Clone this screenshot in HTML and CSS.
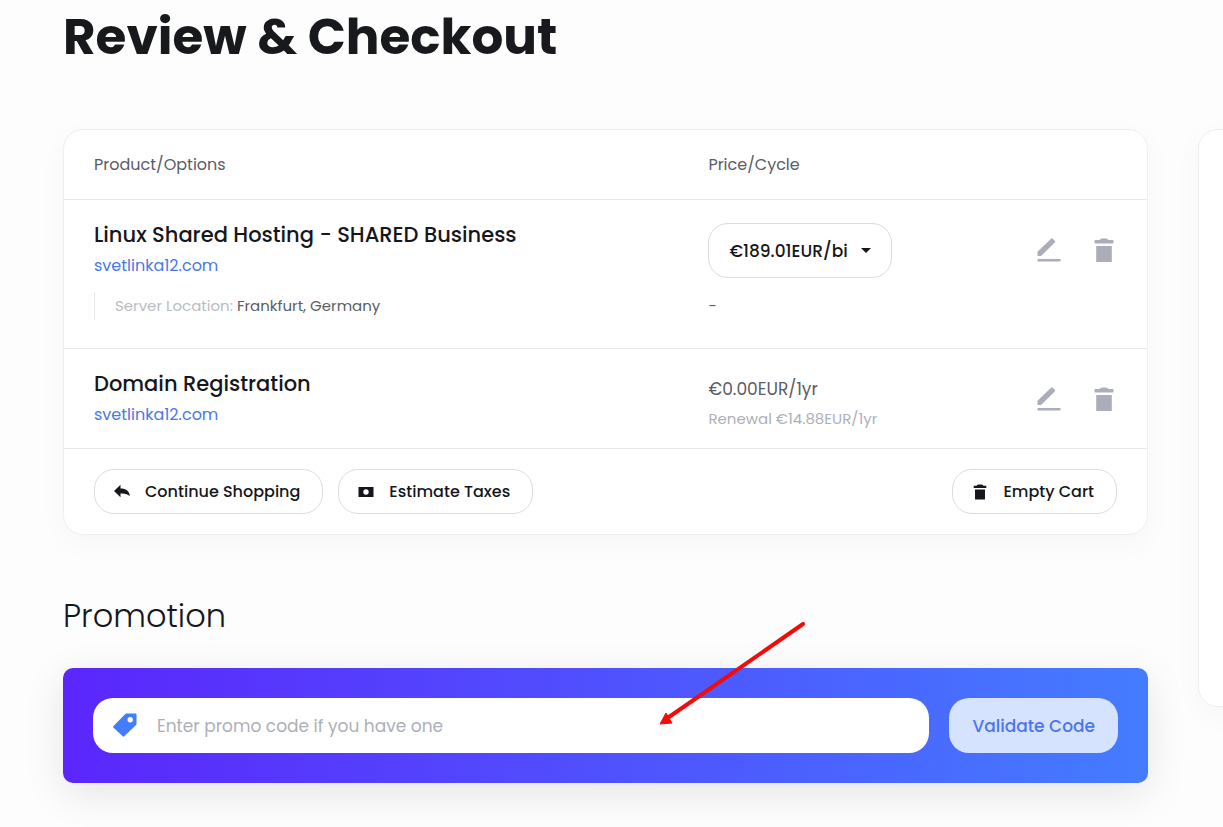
FILE: index.html
```html
<!DOCTYPE html>
<html lang="en">
<head>
  <meta charset="UTF-8" />
  <meta name="viewport" content="width=device-width, initial-scale=1" />
  <title>Review &amp; Checkout</title>
  <link rel="stylesheet" href="styles.css">
</head>
<body>
  <div class="page">
    <h1>Review &amp; Checkout</h1>

    <div class="checkout">
      <main class="main">
        <section class="card">
          <table class="cart">
            <thead>
              <tr>
                <th class="col-product">Product/Options</th>
                <th>Price/Cycle</th>
                <th class="col-actions" aria-label="Actions"></th>
              </tr>
            </thead>
            <tbody>
              <tr>
                <td>
                  <div class="product-name">Linux Shared Hosting - SHARED Business</div>
                  <a class="product-domain" href="#">svetlinka12.com</a>
                </td>
                <td class="cell-select">
                  <div class="cycle">
                    <select class="cycle-select" aria-label="Billing cycle">
                      <option>€189.01EUR/bi</option>
                    </select>
                    <svg class="caret" viewBox="0 0 10 5"><path d="M0 0h10L5 5z"/></svg>
                  </div>
                </td>
                <td class="cell-actions">
                  <div class="actions">
                    <button class="icon-btn" aria-label="Edit">
                      <svg viewBox="0 0 24 24"><path d="M0.500 13.800 14.300 0.500Q14.900 0 15.500 0.600L18 3.100Q18.500 3.700 18 4.300L4.600 17.600Q4.200 18 3.600 18H0.500V13.800zM0.500 21h23v2.500h-23z"/></svg>
                    </button>
                    <button class="icon-btn" aria-label="Remove">
                      <svg viewBox="0 0 24 24"><path d="M3.500 2H7.500Q8.500 0.500 10 0.500H14Q15.500 0.500 16.500 2H20.500Q21.500 2 21.500 3V4.500Q21.500 5.500 20.500 5.500H3.500Q2.500 5.500 2.500 4.500V3Q2.500 2 3.500 2zM4.200 8H19.800V24H4.200z"/></svg>
                    </button>
                  </div>
                </td>
              </tr>
              <tr class="row-end">
                <td class="cell-option">
                  <div class="option"><span>Server Location:</span> Frankfurt, Germany</div>
                </td>
                <td class="cell-option"><div class="option-price">-</div></td>
                <td class="cell-option"></td>
              </tr>
              <tr class="row-end">
                <td>
                  <div class="product-name">Domain Registration</div>
                  <a class="product-domain" href="#">svetlinka12.com</a>
                </td>
                <td class="cell-price">
                  <div class="price">€0.00EUR/1yr</div>
                  <div class="renewal">Renewal €14.88EUR/1yr</div>
                </td>
                <td class="cell-actions">
                  <div class="actions">
                    <button class="icon-btn" aria-label="Edit">
                      <svg viewBox="0 0 24 24"><path d="M0.500 13.800 14.300 0.500Q14.900 0 15.500 0.600L18 3.100Q18.500 3.700 18 4.300L4.600 17.600Q4.200 18 3.600 18H0.500V13.800zM0.500 21h23v2.500h-23z"/></svg>
                    </button>
                    <button class="icon-btn" aria-label="Remove">
                      <svg viewBox="0 0 24 24"><path d="M3.500 2H7.500Q8.500 0.500 10 0.500H14Q15.500 0.500 16.500 2H20.500Q21.500 2 21.500 3V4.500Q21.500 5.500 20.500 5.500H3.500Q2.500 5.500 2.500 4.500V3Q2.500 2 3.500 2zM4.200 8H19.800V24H4.200z"/></svg>
                    </button>
                  </div>
                </td>
              </tr>
            </tbody>
          </table>

          <div class="card-footer">
            <button class="btn">
              <svg viewBox="0 0 16 16"><path d="M0 7 6.500 0.800V4.500C12 4.500 15.500 7 15.800 12.300 13.500 9.800 10.500 9.200 6.500 9.500V13.300z"/></svg>
              Continue Shopping
            </button>
            <button class="btn">
              <svg viewBox="0 0 16 16"><path fill-rule="evenodd" d="M0.500 3h15v10h-15zM8 5.300a2.700 2.700 0 1 0 0 5.400a2.700 2.700 0 1 0 0-5.400z"/></svg>
              Estimate Taxes
            </button>
            <button class="btn btn-empty">
              <svg viewBox="0 0 16 16"><path d="M1.700 1.700H4.500Q5.500 0.500 6.500 0.500H9.500Q10.500 0.500 11.500 1.700H14.300V4H1.700zM3 5.500H13V15.500H3z"/></svg>
              Empty Cart
            </button>
          </div>
        </section>

        <h2>Promotion</h2>
        <form class="promo">
          <div class="promo-field">
            <svg class="promo-tag" viewBox="0 0 24 24"><path fill-rule="evenodd" d="M0.300 12.200 12 0.200Q12.700 -0.500 13.500 -0.500H23Q23.500 -0.500 23.500 0V9.500Q23.500 10.500 22.800 11.200L11.300 22.300Q10.500 23 9.700 22.300L0.300 13.500Q-0.200 12.800 0.300 12.200zM17.200 3a2.700 2.700 0 1 0 0 5.400a2.700 2.700 0 1 0 0-5.400z"/></svg>
            <input type="text" class="promo-input" aria-label="Promo code" placeholder="Enter promo code if you have one" />
          </div>
          <button type="button" class="promo-btn">Validate Code</button>
          <svg class="arrow" viewBox="0 0 148 104"><path d="M143 2 9 95" fill="none" stroke="#f50a0a" stroke-width="4" stroke-linecap="round"/><path d="M0 102 6 91 12 101z" fill="#f50a0a" stroke="#f50a0a"/></svg>
        </form>
      </main>

      <aside class="card summary"></aside>
    </div>
  </div>
</body>
</html>
```

FILE: styles.css
```css
* {
  box-sizing: border-box;
  margin: 0;
  padding: 0;
}
body {
  font-family: Poppins, Inter, sans-serif;
  font-size: 16px;
  line-height: 30px;
  color: #15171c;
  background: #fdfdfd;
  overflow-x: hidden;
}
button,
input,
select {
  font-family: inherit;
}
.page {
  padding: 6px 0 44px 63px;
  overflow: hidden;
}
h1 {
  font-size: 50px;
  line-height: 62px;
  font-weight: 700;
  color: #18191d;
  margin-bottom: 61px;
}
h2 {
  font-size: 32px;
  line-height: 50px;
  font-weight: 300;
  margin: 56px 0 27px;
}

/* the summary column runs off the right edge */
.checkout {
  display: flex;
  align-items: flex-start;
  gap: 50px;
  margin-right: -335px;
}
.main {
  flex: 1;
  min-width: 0;
}
.card {
  background: #fff;
  border: 1px solid #efeff1;
  border-radius: 20px;
  box-shadow: 0 8px 30px rgba(0, 0, 0, 0.03);
}
.summary {
  flex: 0 0 360px;
  min-height: 578px;
}

.cart {
  width: 100%;
  table-layout: fixed;
  border-collapse: separate;
  border-spacing: 0;
}
.cart th {
  height: 70px;
  text-align: left;
  font-weight: 400;
  color: #5a5c66;
  border-bottom: 1px solid #e6e7ea;
}
.cart td {
  vertical-align: top;
  padding-top: 20px;
}
.cart th:first-child,
.cart td:first-child {
  padding-left: 30px;
}
.row-end td {
  border-bottom: 1px solid #e6e7ea;
  padding-bottom: 14px;
}
.col-product {
  width: 59.5%;
}
.col-actions {
  width: 120px;
}
.product-name {
  font-size: 21px;
  font-weight: 500;
}
.product-domain {
  display: block;
  line-height: 32px;
  color: #4a78e8;
  text-decoration: none;
}
.cart .cell-select {
  padding-top: 23px;
}
.cart .cell-price {
  padding-top: 25px;
}
.cart .cell-option {
  padding-top: 10px;
  padding-bottom: 28px;
}
.option,
.option-price {
  font-size: 15px;
  line-height: 28px;
  color: #5a5c66;
}
.option {
  border-left: 1px solid #e6e7ea;
  padding-left: 20px;
}
.option span {
  color: #b9bbc2;
}
.price {
  font-size: 17px;
  color: #5a5c66;
}
.renewal {
  font-size: 15px;
  color: #adafb8;
}
.cycle {
  position: relative;
  width: 184px;
}
.cycle-select {
  display: block;
  width: 100%;
  height: 55px;
  padding: 0 20px;
  appearance: none;
  background: #fff;
  border: 1px solid #dcdde1;
  border-radius: 20px;
  font-size: 17px;
  font-weight: 500;
  color: #15171c;
}
.caret {
  position: absolute;
  right: 21px;
  top: 25px;
  width: 10px;
  height: 5px;
  fill: #15171c;
  pointer-events: none;
}
.cart .cell-actions {
  padding: 30px 23px 0 0;
}
.actions {
  display: flex;
  justify-content: flex-end;
  gap: 15px;
}
.icon-btn {
  display: flex;
  align-items: center;
  justify-content: center;
  width: 40px;
  height: 40px;
  background: none;
  border: none;
  cursor: pointer;
}
.icon-btn svg {
  width: 24px;
  height: 24px;
  fill: #abaeba;
}

.card-footer {
  display: flex;
  gap: 15px;
  padding: 20px 30px;
}
.btn {
  display: flex;
  align-items: center;
  gap: 15px;
  height: 45px;
  padding: 0 22px 0 19px;
  background: #fff;
  border: 1px solid #dcdde1;
  border-radius: 20px;
  font-size: 16px;
  font-weight: 500;
  color: #15171c;
  cursor: pointer;
}
.btn svg {
  width: 16px;
  height: 16px;
  fill: #15171c;
}
.btn-empty {
  margin-left: auto;
}

.promo {
  position: relative;
  display: flex;
  gap: 20px;
  padding: 30px;
  border-radius: 10px;
  background: linear-gradient(90deg, #5b26fc, #447cff);
  box-shadow: 0 10px 40px rgba(0, 0, 0, 0.1);
}
.promo-field {
  flex: 1;
  display: flex;
  align-items: center;
  gap: 20px;
  height: 55px;
  padding: 0 20px;
  background: #fff;
  border-radius: 20px;
}
.promo-tag {
  width: 24px;
  height: 24px;
  fill: #447cff;
  overflow: visible;
}
.promo-input {
  flex: 1;
  border: none;
  outline: none;
  background: none;
  font-size: 17px;
  color: #15171c;
}
.promo-input::placeholder {
  color: #adafb8;
}
.promo-btn {
  height: 55px;
  padding: 0 23px;
  border: none;
  border-radius: 20px;
  background: #d6e3ff;
  color: #4a75ee;
  font-size: 17px;
  font-weight: 500;
  cursor: pointer;
}
.arrow {
  position: absolute;
  left: 55%;
  top: -46px;
  width: 148px;
  height: 104px;
  pointer-events: none;
}
```
